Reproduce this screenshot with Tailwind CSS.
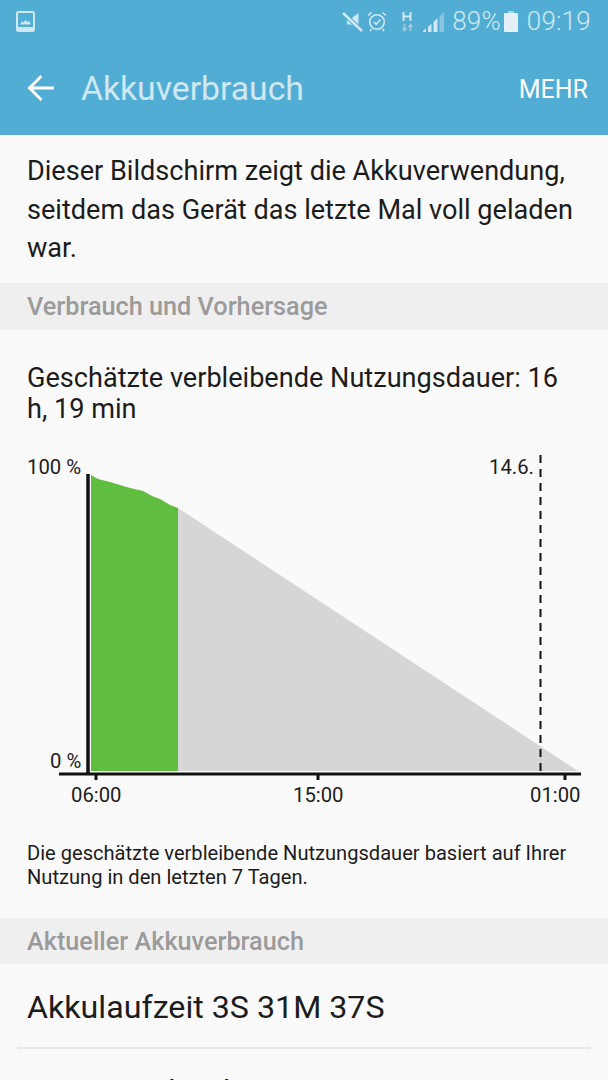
<!DOCTYPE html>
<html lang="de">
<head>
<meta charset="UTF-8">
<title>Akkuverbrauch</title>
<script src="https://cdn.jsdelivr.net/npm/@tailwindcss/browser@4"></script>
</head>
<body class="bg-[#fafafa]">
<div class="w-[608px] h-[1080px] overflow-hidden font-['Roboto',sans-serif] text-[#1c1c1c]">
  <!-- header -->
  <header class="h-[135px] bg-[#52add4] flex flex-col">
    <div class="h-[42px] flex items-center pl-[16px] pr-[17px] text-[#cfe8f3]">
      <svg class="w-[19px] h-[21px]" viewBox="0 0 19 21"><rect x="1" y="1" width="17" height="19" rx="1.5" fill="none" stroke="#cfe8f3" stroke-width="2"/><rect x="1" y="16" width="17" height="4" fill="#cfe8f3"/><path d="M4 13.5 L6 10.5 L7.5 11.5 L9.5 9 L11.5 11 L13 10 L15 13.5 Z" fill="#cfe8f3"/></svg>
      <div class="ml-auto flex items-center">
        <svg class="w-[21px] h-[21px]" viewBox="0 0 21 21"><path d="M2 6.5h4L13.500 1v15.500L6 12.500H2z" fill="#cfe8f3" transform="translate(3,1)"/><path d="M1 2 L20 20" stroke="#52add4" stroke-width="4.500"/><path d="M1 2 L20 20" stroke="#cfe8f3" stroke-width="2.500"/></svg>
        <svg class="w-[20px] h-[21px] ml-[4px]" viewBox="0 0 20 21" fill="none" stroke="#cfe8f3" stroke-width="1.600"><circle cx="10" cy="11" r="7.300"/><path d="M6.800 11 L9.200 13.400 L13.500 8.500"/><path d="M1 4.500 L4.500 1.500 M19 4.500 L15.500 1.500 M4.500 18 L3 20 M15.500 18 L17 20"/></svg>
        <svg class="w-[13px] h-[21px] ml-[14px]" viewBox="0 0 13 21"><path d="M2.500 1v9M9.500 1v9M2.500 5.500h7" stroke="#cfe8f3" stroke-width="2" fill="none"/><path d="M3.500 13v6M1.500 17l2 2.500 2-2.500M9.500 20v-6M7.500 16l2-2.500 2 2.500" stroke="#9ccde3" stroke-width="1.500" fill="none"/></svg>
        <svg class="w-[22px] h-[21px] ml-[9px]" viewBox="0 0 22 21"><path d="M0 21h3v-3.500L0 20z" fill="#cfe8f3"/><path d="M5 21h3.500v-8.500L5 16z" fill="#cfe8f3"/><path d="M10.500 21h4V7l-4 4z" fill="#cfe8f3"/><path d="M16.500 21H21V1l-4.500 4.500z" fill="#8fc6df"/></svg>
        <span class="text-[26px] leading-none ml-[7px] font-light tracking-[0.2px]">89%</span>
        <svg class="w-[14px] h-[21px] ml-[3px]" viewBox="0 0 14 21"><path d="M4.500 0h5v2h3.500a1 1 0 0 1 1 1v17a1 1 0 0 1-1 1H1a1 1 0 0 1-1-1V3a1 1 0 0 1 1-1h3.500z" fill="#e3f1f7"/><rect x="4.500" y="0" width="5" height="2" fill="#a8d4e7"/></svg>
        <span class="text-[26px] leading-none ml-[9px] font-light tracking-[0.2px]">09:19</span>
      </div>
    </div>
    <div class="flex-1 flex items-center pl-[27px] pr-[20px] pt-[1px]">
      <svg class="w-[28px] h-[28px] mt-[-2px]" viewBox="0 0 28 28" fill="none" stroke="#fff" stroke-width="3"><path d="M27 14H3M14.500 2 L2.500 14 L14.500 26"/></svg>
      <h1 class="ml-[26px] text-[33.700px] leading-none text-[#cfe8f3]">Akkuverbrauch</h1>
      <span class="ml-auto text-[25px] leading-none text-white">MEHR</span>
    </div>
  </header>

  <p class="h-[148px] px-[27px] pt-[17px] text-[27.100px] leading-[38.500px]">Dieser Bildschirm zeigt die Akkuverwendung, seitdem das Gerät das letzte Mal voll geladen war.</p>

  <div class="h-[47px] bg-[#efefef] flex items-center px-[27px] pt-[1px] text-[25.250px] font-medium text-[#9b9b9b]">Verbrauch und Vorhersage</div>

  <p class="px-[27px] pt-[33px] mb-[-1px] pr-[40px] text-[27.100px] leading-[31px]">Geschätzte verbleibende Nutzungsdauer: 16 h, 19 min</p>

  <!-- chart -->
  <div class="relative h-[388px]">
    <svg class="absolute left-0 top-0 w-[608px] h-[388px]" viewBox="0 0 608 388">
      <g transform="translate(0,-424)">
        <path d="M178 508 L578 771 L178 771 Z" fill="#d6d6d6"/>
        <path d="M91 475 L98 479 L110 482 L130 488 L143 491 L152 496 L160 499 L170 505 L178 508 L178 771 L91 771 Z" fill="#5fbd3f"/>
        <path d="M88 474V773" stroke="#111" stroke-width="3.500"/>
        <path d="M59 774H581" stroke="#111" stroke-width="3"/>
        <path d="M96 775v5M318 775v5M565 775v5" stroke="#111" stroke-width="3"/>
        <path d="M540.500 455V771" stroke="#111" stroke-width="2" stroke-dasharray="8 6"/>
      </g>
    </svg>
    <span class="absolute left-[27px] top-[33px] text-[20.300px] leading-none">100 %</span>
    <span class="absolute left-[50px] top-[327px] text-[20.300px] leading-none">0 %</span>
    <span class="absolute left-[489px] top-[33px] text-[20.300px] leading-none">14.6.</span>
    <span class="absolute left-[71px] top-[361px] text-[20.300px] leading-none">06:00</span>
    <span class="absolute left-[293px] top-[361px] text-[20.300px] leading-none">15:00</span>
    <span class="absolute left-[530px] top-[361px] text-[20.300px] leading-none">01:00</span>
  </div>

  <p class="h-[106px] px-[27px] pt-[29px] text-[20.100px] leading-[24px]">Die geschätzte verbleibende Nutzungsdauer basiert auf Ihrer Nutzung in den letzten 7 Tagen.</p>

  <div class="h-[46px] bg-[#efefef] flex items-center px-[27px] pt-[1px] text-[25.250px] font-medium text-[#9b9b9b]">Aktueller Akkuverbrauch</div>

  <div class="h-[85px] mx-[17px] px-[10px] pt-[4px] flex items-center border-b-2 border-[#e8e8e8] text-[32.200px]">Akkulaufzeit 3S 31M 37S</div>

  <div class="pl-[119px] pt-[26px] text-[32px] leading-none">Android OS</div>
</div>
</body>
</html>
